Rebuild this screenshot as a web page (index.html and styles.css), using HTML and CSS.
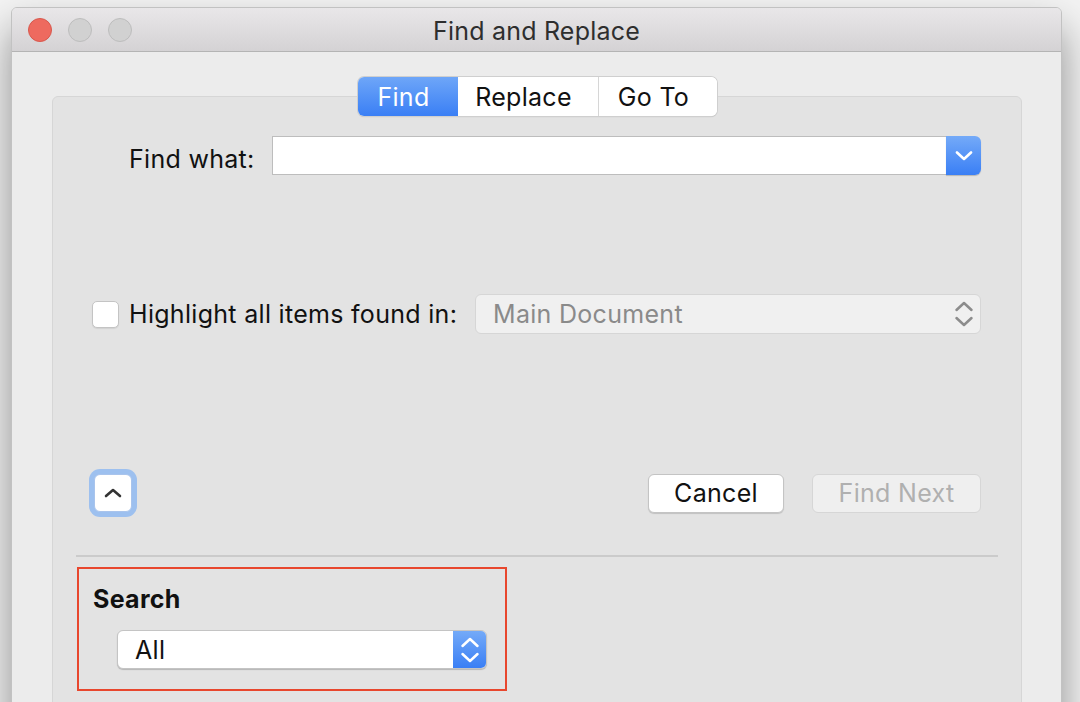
FILE: index.html
```html
<!DOCTYPE html>
<html lang="en">
<head>
    <meta charset="UTF-8">
    <meta name="viewport" content="width=device-width, initial-scale=1.0">
    <title>Find and Replace</title>

    <link rel="stylesheet" href="styles.css">
</head>
<body>
    <div class="window">
        <div class="titlebar">
            <div class="lights">
                <span class="light close"></span>
                <span class="light"></span>
                <span class="light"></span>
            </div>
            <div class="title">Find and Replace</div>
            <div></div>
        </div>

        <div class="content">
            <div class="tabs">
                <button class="tab tab-find active" type="button">Find</button>
                <button class="tab tab-replace" type="button">Replace</button>
                <button class="tab tab-goto" type="button">Go To</button>
            </div>

            <div class="panel">
                <div class="row find-row">
                    <label class="find-label">Find what:</label>
                    <div class="combo">
                        <input class="combo-input" type="text">
                        <span class="combo-btn">
                            <svg width="18" height="10" viewBox="0 0 18 10"><path d="M2 1.5 L9 8 L16 1.5" fill="none" stroke="#fff" stroke-width="2.6" stroke-linecap="round" stroke-linejoin="round"/></svg>
                        </span>
                    </div>
                </div>

                <div class="row highlight-row">
                    <span class="checkbox"></span>
                    <span class="check-label">Highlight all items found in:</span>
                    <div class="popup popup-disabled">
                        <span>Main Document</span>
                        <svg class="updown" width="20" height="28" viewBox="0 0 20 28"><path d="M2.5 10 L10 3 L17.5 10 M2.5 18 L10 25 L17.5 18" fill="none" stroke="#8c8c8c" stroke-width="2.5" stroke-linecap="round" stroke-linejoin="round"/></svg>
                    </div>
                </div>

                <div class="row button-row">
                    <button class="toggle" type="button">
                        <svg width="18" height="10" viewBox="0 0 18 10"><path d="M2 8 L9 2 L16 8" fill="none" stroke="#333" stroke-width="2.6" stroke-linecap="round" stroke-linejoin="round"/></svg>
                    </button>
                    <button class="push cancel" type="button">Cancel</button>
                    <button class="push find-next" type="button" disabled>Find Next</button>
                </div>

                <div class="separator"></div>

                <div class="search-box">
                    <div class="search-title">Search</div>
                    <div class="popup search-popup">
                        <span>All</span>
                        <span class="stepper">
                            <svg width="20" height="28" viewBox="0 0 20 28"><path d="M2.5 10 L10 3 L17.5 10 M2.5 18 L10 25 L17.5 18" fill="none" stroke="#fff" stroke-width="2.5" stroke-linecap="round" stroke-linejoin="round"/></svg>
                        </span>
                    </div>
                </div>
            </div>
        </div>
    </div>
</body>
</html>
```

FILE: styles.css
```css
body {
    margin: 0;
    padding: 0;
    background: #f3f3f3;
    font-family: Inter, "Liberation Sans", sans-serif;
    letter-spacing: 0.3px;
    color: #111;
    overflow: hidden;
}

button {
    font-family: inherit;
    letter-spacing: inherit;
    padding: 0;
    cursor: pointer;
}

.window {
    margin: 7px 0 0 11px;
    width: 1051px;
    height: 760px;
    box-sizing: border-box;
    border: 1px solid #c2c2c2;
    border-radius: 6px 6px 0 0;
    background: #ececec;
    box-shadow: 0 22px 40px rgba(0, 0, 0, 0.42);
    overflow: hidden;
}

.titlebar {
    display: grid;
    grid-template-columns: 1fr auto 1fr;
    align-items: center;
    height: 43px;
    border-bottom: 1px solid #b4b4b4;
    background: linear-gradient(#e9e7e9, #d4d2d4);
}

.lights {
    display: flex;
    gap: 16px;
    padding-left: 16px;
}

.light {
    width: 22px;
    height: 22px;
    border-radius: 50%;
    background: #d1d1d1;
    border: 1px solid #bdbdbd;
}

.light.close {
    background: #ee6a5f;
    border-color: #d8584d;
}

.title {
    font-size: 25px;
    letter-spacing: 0.2px;
    color: #2e2e2e;
    padding-top: 2px;
}

.content {
    padding: 25px 39px 0 40px;
}

.tabs {
    position: relative;
    z-index: 1;
    display: flex;
    width: 359px;
    height: 39px;
    margin: 0 auto -20px;
    border-radius: 6px;
    background: #fff;
    box-shadow: 0 0 0 1px #cfcfcf, 0 1px 1px rgba(0, 0, 0, 0.2);
    overflow: hidden;
}

.tab {
    border: none;
    background: #fff;
    font-size: 25px;
    color: #111;
    height: 39px;
    padding-right: 8px;
}

.tab-find {
    width: 100px;
}

.tab-replace {
    width: 141px;
    border-right: 1px solid #d6d6d6;
}

.tab-goto {
    width: 118px;
}

.tab.active {
    color: #fff;
    background: linear-gradient(#6ea6f8, #3a7ff5);
}

.panel {
    height: 700px;
    padding: 39px 40px 0 39px;
    border: 1px solid #d6d6d6;
    border-radius: 6px;
    background: #e3e3e3;
}

.row {
    display: flex;
    align-items: center;
}

.find-row {
    height: 39px;
}

.find-label {
    font-size: 25px;
    padding: 7px 0 0 37px;
}

.combo {
    display: flex;
    margin-left: auto;
    width: 709px;
    height: 39px;
}

.combo-input {
    flex: 1;
    box-sizing: border-box;
    height: 39px;
    margin: 0;
    border: 1px solid #bdbdbd;
    border-right: none;
    background: #fff;
    outline: none;
}

.combo-btn {
    display: flex;
    align-items: center;
    justify-content: center;
    width: 35px;
    border-radius: 0 6px 6px 0;
    background: linear-gradient(#74aaf8, #3a7ff5);
    box-shadow: 0 1px 1px rgba(0, 0, 0, 0.2);
}

.highlight-row {
    height: 40px;
    margin-top: 119px;
}

.checkbox {
    box-sizing: border-box;
    width: 27px;
    height: 27px;
    border: 1px solid #c4c4c4;
    border-radius: 5px;
    background: #fff;
    box-shadow: 0 1px 1px rgba(0, 0, 0, 0.08);
}

.check-label {
    font-size: 25px;
    margin-left: 10px;
}

.popup {
    display: flex;
    align-items: center;
    justify-content: space-between;
    box-sizing: border-box;
    font-size: 25px;
}

.popup-disabled {
    margin-left: auto;
    width: 506px;
    height: 40px;
    padding: 0 6px 0 17px;
    border: 1px solid #d6d6d6;
    border-radius: 6px;
    background: #f0f0f0;
    color: #8a8a8a;
}

.button-row {
    height: 50px;
    margin-top: 134px;
}

.toggle {
    display: flex;
    align-items: center;
    justify-content: center;
    width: 38px;
    height: 38px;
    margin-left: 2px;
    border: 1px solid #a9c4ec;
    border-radius: 6px;
    background: #fff;
    box-shadow: 0 0 0 5px #9dc0ef;
}

.push {
    height: 39px;
    box-sizing: border-box;
    border: 1px solid #c4c4c4;
    border-radius: 6px;
    background: #fff;
    font-size: 25px;
    color: #111;
    box-shadow: 0 1px 1px rgba(0, 0, 0, 0.15);
}

.cancel {
    width: 136px;
    margin-left: auto;
}

.find-next {
    width: 169px;
    margin-left: 28px;
    background: #efefef;
    border-color: #d6d6d6;
    color: #b0b0b0;
    box-shadow: none;
}

.separator {
    height: 2px;
    margin: 37px -17px 0 -16px;
    background: #cbcbcb;
}

.search-box {
    box-sizing: border-box;
    width: 430px;
    height: 124px;
    margin: 10px 0 0 -15px;
    padding: 15px 0 0 14px;
    border: 2px solid #e8472e;
}

.search-title {
    font-size: 25px;
    font-weight: bold;
    line-height: 30px;
}

.search-popup {
    width: 370px;
    height: 39px;
    margin: 16px 0 0 24px;
    padding-left: 17px;
    border: 1px solid #c4c4c4;
    border-radius: 6px;
    background: #fff;
    box-shadow: 0 1px 1px rgba(0, 0, 0, 0.2);
    overflow: hidden;
}

.stepper {
    display: flex;
    align-items: center;
    justify-content: center;
    width: 33px;
    height: 100%;
    background: linear-gradient(#74aaf8, #3a7ff5);
}
```
